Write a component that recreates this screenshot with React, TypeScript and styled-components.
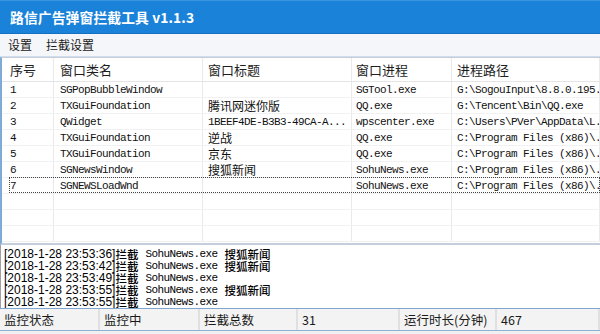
import React from 'react'
import styled, { createGlobalStyle, css } from 'styled-components'

const GlobalStyle = createGlobalStyle`
  html, body {
    margin: 0;
    padding: 0;
    width: 600px;
    height: 334px;
    overflow: hidden;
    background: #f0f0f0;
  }
  * { box-sizing: border-box; }
`

const CJK = `"Noto Sans CJK SC", "Noto Sans", sans-serif`
const MONO = `"Liberation Mono", "Noto Sans CJK SC", monospace`

const Window = styled.div`
  width: 600px;
  height: 334px;
  display: flex;
  flex-direction: column;
  font-family: ${CJK};
  color: #1a1a1a;
`

const TitleBar = styled.div`
  height: 34px;
  flex: none;
  display: flex;
  align-items: center;
  padding: 0 0 1px 10px;
  background: #1a82d8;
  border-top: 1px solid #3a95e0;
  border-bottom: 1px solid #1670c2;
  color: #fff;
  font-size: 13.8px;
  font-weight: 700;
  letter-spacing: 0.1px;
`

const MenuBar = styled.div`
  height: 23px;
  flex: none;
  display: flex;
  align-items: center;
  gap: 14px;
  padding: 0 8px 1px;
  background: #f4f6f9;
  border-bottom: 1px solid #cddff0;
  font-size: 12px;
`

const ListView = styled.div`
  height: 188px;
  flex: none;
  overflow: hidden;
  background: #fff;
  border-top: 1px solid #c8ccd2;
  border-left: 2px solid #7fa9d6;
  border-bottom: 2px solid #c4cfdb;
`

const Row = styled.div<{ $head?: boolean; $focus?: boolean }>`
  position: relative;
  display: grid;
  grid-template-columns: 52px 149px 149px 100px 1fr;
  height: 16px;
  border-bottom: 1px solid #f1f1f1;
  ${p =>
    p.$head &&
    css`
      height: 24px;
      border-bottom: 1px solid #e4e4e4;
    `}
  ${p =>
    p.$focus &&
    css`
      &::after {
        content: '';
        position: absolute;
        left: 7px;
        right: 0;
        top: -1px;
        bottom: 0;
        border: 1px dotted #444;
        pointer-events: none;
      }
    `}
`

const Cell = styled.div<{ $head?: boolean; $cjk?: boolean; $pad?: number }>`
  display: flex;
  align-items: center;
  padding-left: ${p => p.$pad ?? 6}px;
  border-right: 1px solid #e9e9e9;
  white-space: nowrap;
  overflow: hidden;
  font-family: ${MONO};
  font-size: 11px;
  letter-spacing: -0.6px;
  color: #111;
  ${p =>
    p.$cjk &&
    css`
      font-family: ${CJK};
      font-size: 12px;
      letter-spacing: 0;
    `}
  ${p =>
    p.$head &&
    css`
      font-family: ${CJK};
      font-size: 13px;
      letter-spacing: 0;
      color: #1e1e1e;
    `}
`

const LogBox = styled.div`
  flex: 1;
  background: #fff;
  border-left: 1px solid #a0a0a0;
  padding: 3px 0 0 3px;
  overflow: hidden;
`

const LogLine = styled.div`
  height: 12px;
  display: flex;
  align-items: center;
  white-space: nowrap;
  color: #000;
  & > span {
    line-height: 12px;
  }
`

const LogTime = styled.span`
  font-family: 'Liberation Sans', sans-serif;
  font-size: 12px;
`

const LogCjk = styled.span`
  font-family: ${CJK};
  font-size: 11.5px;
  font-weight: 500;
`

const LogMono = styled.span`
  font-family: ${MONO};
  font-size: 11px;
  letter-spacing: -0.6px;
  margin: 0 7px;
`

const StatusBar = styled.div`
  height: 23px;
  flex: none;
  display: grid;
  grid-template-columns: 100px 100px 98px 102px 97px 1fr;
  background: #f3f3f3;
  border-top: 1px solid #7fa6d0;
  border-bottom: 1px solid #8fb1d6;
  margin-bottom: 3px;
`

const StatusCell = styled.div`
  display: flex;
  align-items: center;
  padding-left: 4px;
  border-right: 2px solid #e0e0e0;
  font-size: 12.5px;
  color: #1a1a1a;
`

const columns = ['序号', '窗口类名', '窗口标题', '窗口进程', '进程路径']
const pads = [8, 6, 5, 4, 5]

const rows = [
  ['1', 'SGPopBubbleWindow', '', 'SGTool.exe', 'G:\\SogouInput\\8.8.0.195.'],
  ['2', 'TXGuiFoundation', '腾讯网迷你版', 'QQ.exe', 'G:\\Tencent\\Bin\\QQ.exe'],
  ['3', 'QWidget', '1BEEF4DE-B3B3-49CA-A...', 'wpscenter.exe', 'C:\\Users\\PVer\\AppData\\L.'],
  ['4', 'TXGuiFoundation', '逆战', 'QQ.exe', 'C:\\Program Files (x86)\\.'],
  ['5', 'TXGuiFoundation', '京东', 'QQ.exe', 'C:\\Program Files (x86)\\.'],
  ['6', 'SGNewsWindow', '搜狐新闻', 'SohuNews.exe', 'C:\\Program Files (x86)\\.'],
  ['7', 'SGNEWSLoadWnd', '', 'SohuNews.exe', 'C:\\Program Files (x86)\\.'],
  ['', '', '', '', ''],
  ['', '', '', '', ''],
  ['', '', '', '', ''],
]

const logs = [
  { time: '36', title: '搜狐新闻' },
  { time: '42', title: '搜狐新闻' },
  { time: '49', title: '' },
  { time: '55', title: '搜狐新闻' },
  { time: '55', title: '' },
]

const status = ['监控状态', '监控中', '拦截总数', '31', '运行时长(分钟)', '467']

const isCjk = (s: string) => /[\u4e00-\u9fff]/.test(s)

const App = () => {
  return (
    <Window>
      <GlobalStyle />
      <TitleBar>路信广告弹窗拦截工具 v1.1.3</TitleBar>
      <MenuBar>
        <span>设置</span>
        <span>拦截设置</span>
      </MenuBar>

      <ListView>
        <Row $head>
          {columns.map((c, i) => (
            <Cell key={i} $head $pad={pads[i]}>
              {c}
            </Cell>
          ))}
        </Row>
        {rows.map((r, i) => (
          <Row key={i} $focus={i === 6}>
            {r.map((v, j) => (
              <Cell key={j} $pad={pads[j]} $cjk={isCjk(v)}>
                {v}
              </Cell>
            ))}
          </Row>
        ))}
      </ListView>

      <LogBox>
        {logs.map((l, i) => (
          <LogLine key={i}>
            <LogTime>[2018-1-28 23:53:{l.time}]</LogTime>
            <LogCjk>拦截</LogCjk>
            <LogMono>SohuNews.exe</LogMono>
            {l.title && <LogCjk>{l.title}</LogCjk>}
          </LogLine>
        ))}
      </LogBox>

      <StatusBar>
        {status.map((s, i) => (
          <StatusCell key={i}>{s}</StatusCell>
        ))}
      </StatusBar>
    </Window>
  )
}

export default App
